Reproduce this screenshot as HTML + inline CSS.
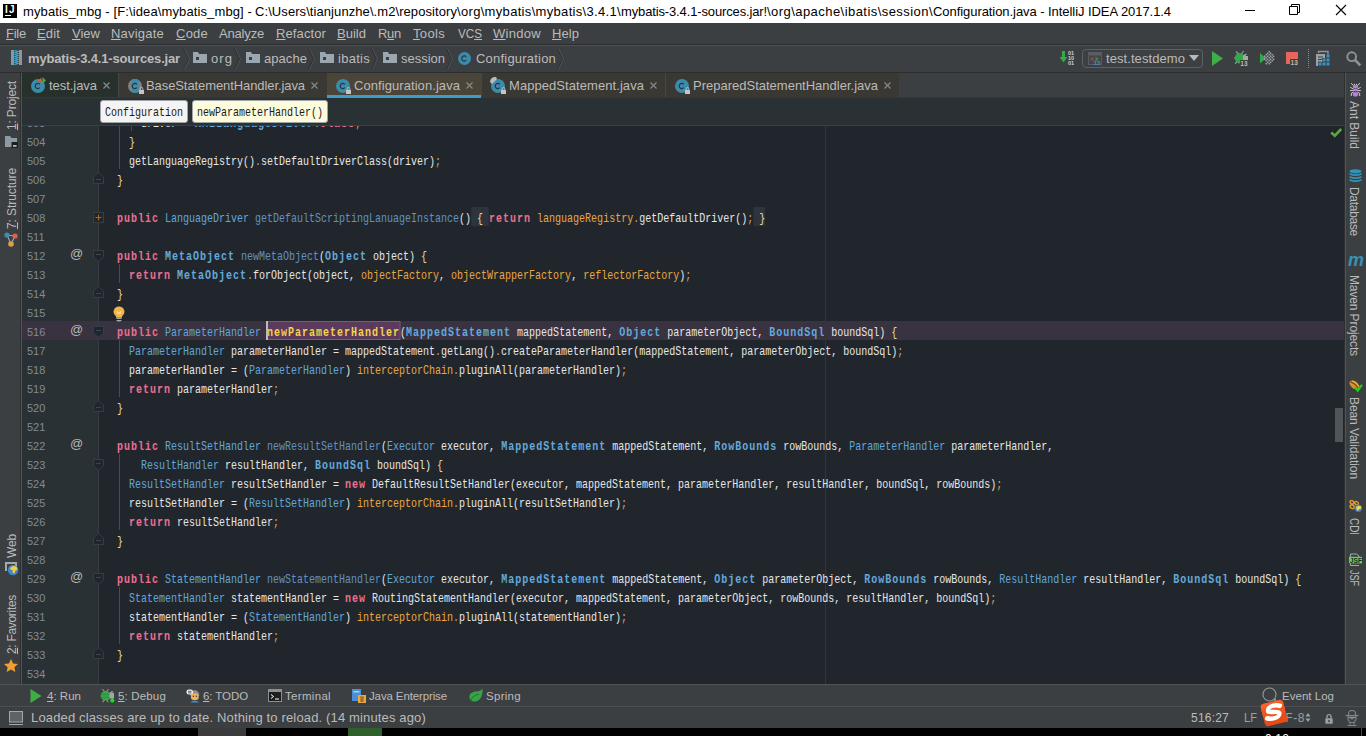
<!DOCTYPE html>
<html><head><meta charset="utf-8"><title>mybatis_mbg - IntelliJ IDEA</title>
<style>
html,body{margin:0;padding:0;background:#000;}
#root{position:relative;width:1366px;height:736px;overflow:hidden;background:#3c3f41;font-family:"Liberation Sans", sans-serif;}
#root div,#root svg,#root span.tx,#root pre,#root span.lnum{position:absolute;}
.tx{white-space:pre;line-height:20px;height:20px;}
.tx u{text-decoration:underline;text-underline-offset:1px;}
pre.cl{margin:0;left:6px;height:19px;line-height:19px;font-family:"Liberation Mono", monospace;font-size:13px;letter-spacing:0;color:#e6e6e6;white-space:pre;padding-top:2px;transform:scaleX(0.76923);transform-origin:0 0;}
pre.cl b{font-weight:normal;}
pre.cl i{font-style:normal;color:#c9a56e;}
pre.cl b.k{font-weight:bold;color:#ed7091;letter-spacing:1.3px;}
pre.cl b.T{font-weight:bold;color:#64aadc;letter-spacing:1.3px;}
pre.cl b.t{color:#62a6d8;}
pre.cl b.m{color:#6391bd;}
pre.cl b.f{color:#e8a742;}
pre.cl b.b{color:#e6dba0;}
pre.cl b.F{color:#e6dba0;background:#2e343b;display:inline-block;height:19px;margin-top:-2px;padding-top:2px;vertical-align:top;box-sizing:border-box;}
pre.cl b.H{font-weight:bold;color:#f4d24e;letter-spacing:1.3px;background:#5b3a5c;outline:1px solid #7d5a7d;outline-offset:-1px;display:inline-block;height:19px;margin-top:-2px;padding-top:2px;vertical-align:top;box-sizing:border-box;}
.bc{font-family:"Liberation Mono", monospace;font-size:13px;letter-spacing:0;line-height:19px;transform:scaleX(0.76923);transform-origin:0 0;}
span.lnum{left:5px;font-size:11px;line-height:19px;height:19px;color:#7f8b95;letter-spacing:0px;padding-top:2px;}
</style></head>
<body><div id="root">
<div style="left:0px;top:0px;width:1366px;height:23px;background:#ffffff;"></div>
<div style="left:0px;top:23px;width:1366px;height:21px;background:#3c3f41;"></div>
<div style="left:0px;top:44px;width:1366px;height:1px;background:#2a2c2d;"></div>
<div style="left:0px;top:45px;width:1366px;height:1px;background:#515455;"></div>
<div style="left:0px;top:46px;width:1366px;height:26px;background:#3c3f41;"></div>
<div style="left:0px;top:72px;width:1366px;height:1px;background:#2b2d2e;"></div>
<div style="left:0px;top:73px;width:20px;height:611px;background:#3c3f41;"></div>
<div style="left:20px;top:73px;width:1px;height:611px;background:#2d2f31;"></div>
<div style="left:21px;top:73px;width:1px;height:611px;background:#515455;"></div>
<div style="left:22px;top:73px;width:1323px;height:25px;background:#3c3f41;"></div>
<div style="left:22px;top:97px;width:1323px;height:1px;background:#34383b;"></div>
<div style="left:22px;top:98px;width:1323px;height:27px;background:#2a3135;"></div>
<div style="left:22px;top:125px;width:1323px;height:1px;background:#3a4045;"></div>
<div style="left:22px;top:126px;width:77px;height:558px;background:#2a3135;"></div>
<div style="left:98px;top:126px;width:1px;height:558px;background:#343c40;"></div>
<div style="left:99px;top:126px;width:1246px;height:558px;background:#21262d;"></div>
<div style="left:1344px;top:73px;width:1px;height:611px;background:#2d2f31;"></div>
<div style="left:1345px;top:73px;width:1px;height:611px;background:#515455;"></div>
<div style="left:1346px;top:73px;width:20px;height:611px;background:#3c3f41;"></div>
<div style="left:0px;top:684px;width:1366px;height:1px;background:#515455;"></div>
<div style="left:0px;top:685px;width:1366px;height:21px;background:#3c3f41;"></div>
<div style="left:0px;top:706px;width:1366px;height:1px;background:#4c4f51;"></div>
<div style="left:0px;top:707px;width:1366px;height:21px;background:#3c3f41;"></div>
<div style="left:0px;top:728px;width:1366px;height:8px;background:#000000;"></div>
<div style="left:198px;top:728px;width:48px;height:8px;background:#3b3b3b;"></div>
<div style="left:348px;top:728px;width:34px;height:8px;background:#2f5f2a;"></div>
<div style="left:22px;top:321px;width:76px;height:19px;background:#393240;"></div>
<div style="left:99px;top:321px;width:1245px;height:19px;background:#393240;"></div>
<div style="left:825px;top:126px;width:1px;height:558px;background:#30363c;"></div>
<div id="ed" style="left:99px;top:126px;width:1245px;height:558px;overflow:hidden">
<pre class="cl" style="top:-14px">      driver = <b class="T">XMLLanguageDriver</b><i>.</i><b class="k">class</b><i>;</i></pre>
<pre class="cl" style="top:5px">    <b class="b">}</b></pre>
<pre class="cl" style="top:24px">    getLanguageRegistry()<i>.</i>setDefaultDriverClass(driver)<i>;</i></pre>
<pre class="cl" style="top:43px">  <b class="b">}</b></pre>
<pre class="cl" style="top:81px">  <b class="k">public</b> <b class="t">LanguageDriver</b> <b class="m">getDefaultScriptingLanuageInstance</b>()<b class="F"> { </b><b class="k">return</b> <b class="f">languageRegistry</b><i>.</i>getDefaultDriver()<i>;</i><b class="F"> }</b></pre>
<pre class="cl" style="top:119px">  <b class="k">public</b> <b class="T">MetaObject</b> <b class="m">newMetaObject</b>(<b class="T">Object</b> object) <b class="b">{</b></pre>
<pre class="cl" style="top:138px">    <b class="k">return</b> <b class="T">MetaObject</b><i>.</i>forObject(object, <b class="f">objectFactory</b>, <b class="f">objectWrapperFactory</b>, <b class="f">reflectorFactory</b>)<i>;</i></pre>
<pre class="cl" style="top:157px">  <b class="b">}</b></pre>
<pre class="cl" style="top:195px">  <b class="k">public</b> <b class="t">ParameterHandler</b> <b class="H">newParameterHandler</b>(<b class="T">MappedStatement</b> mappedStatement, <b class="T">Object</b> parameterObject, <b class="T">BoundSql</b> boundSql) <b class="b">{</b></pre>
<pre class="cl" style="top:214px">    <b class="t">ParameterHandler</b> parameterHandler = mappedStatement<i>.</i>getLang()<i>.</i>createParameterHandler(mappedStatement, parameterObject, boundSql)<i>;</i></pre>
<pre class="cl" style="top:233px">    parameterHandler = (<b class="t">ParameterHandler</b>) <b class="f">interceptorChain</b><i>.</i>pluginAll(parameterHandler)<i>;</i></pre>
<pre class="cl" style="top:252px">    <b class="k">return</b> parameterHandler<i>;</i></pre>
<pre class="cl" style="top:271px">  <b class="b">}</b></pre>
<pre class="cl" style="top:309px">  <b class="k">public</b> <b class="t">ResultSetHandler</b> <b class="m">newResultSetHandler</b>(<b class="t">Executor</b> executor, <b class="T">MappedStatement</b> mappedStatement, <b class="T">RowBounds</b> rowBounds, <b class="t">ParameterHandler</b> parameterHandler,</pre>
<pre class="cl" style="top:328px">      <b class="t">ResultHandler</b> resultHandler, <b class="T">BoundSql</b> boundSql) <b class="b">{</b></pre>
<pre class="cl" style="top:347px">    <b class="t">ResultSetHandler</b> resultSetHandler = <b class="k">new</b> DefaultResultSetHandler(executor, mappedStatement, parameterHandler, resultHandler, boundSql, rowBounds)<i>;</i></pre>
<pre class="cl" style="top:366px">    resultSetHandler = (<b class="t">ResultSetHandler</b>) <b class="f">interceptorChain</b><i>.</i>pluginAll(resultSetHandler)<i>;</i></pre>
<pre class="cl" style="top:385px">    <b class="k">return</b> resultSetHandler<i>;</i></pre>
<pre class="cl" style="top:404px">  <b class="b">}</b></pre>
<pre class="cl" style="top:442px">  <b class="k">public</b> <b class="t">StatementHandler</b> <b class="m">newStatementHandler</b>(<b class="t">Executor</b> executor, <b class="T">MappedStatement</b> mappedStatement, <b class="T">Object</b> parameterObject, <b class="T">RowBounds</b> rowBounds, <b class="t">ResultHandler</b> resultHandler, <b class="T">BoundSql</b> boundSql) <b class="b">{</b></pre>
<pre class="cl" style="top:461px">    <b class="t">StatementHandler</b> statementHandler = <b class="k">new</b> RoutingStatementHandler(executor, mappedStatement, parameterObject, rowBounds, resultHandler, boundSql)<i>;</i></pre>
<pre class="cl" style="top:480px">    statementHandler = (<b class="t">StatementHandler</b>) <b class="f">interceptorChain</b><i>.</i>pluginAll(statementHandler)<i>;</i></pre>
<pre class="cl" style="top:499px">    <b class="k">return</b> statementHandler<i>;</i></pre>
<pre class="cl" style="top:518px">  <b class="b">}</b></pre>
</div>
<div id="ln" style="left:22px;top:126px;width:76px;height:558px;overflow:hidden">
<span class="lnum" style="top:-14px">503</span>
<span class="lnum" style="top:5px">504</span>
<span class="lnum" style="top:24px">505</span>
<span class="lnum" style="top:43px">506</span>
<span class="lnum" style="top:62px">507</span>
<span class="lnum" style="top:81px">508</span>
<span class="lnum" style="top:100px">511</span>
<span class="lnum" style="top:119px">512</span>
<span class="lnum" style="top:138px">513</span>
<span class="lnum" style="top:157px">514</span>
<span class="lnum" style="top:176px">515</span>
<span class="lnum" style="top:195px">516</span>
<span class="lnum" style="top:214px">517</span>
<span class="lnum" style="top:233px">518</span>
<span class="lnum" style="top:252px">519</span>
<span class="lnum" style="top:271px">520</span>
<span class="lnum" style="top:290px">521</span>
<span class="lnum" style="top:309px">522</span>
<span class="lnum" style="top:328px">523</span>
<span class="lnum" style="top:347px">524</span>
<span class="lnum" style="top:366px">525</span>
<span class="lnum" style="top:385px">526</span>
<span class="lnum" style="top:404px">527</span>
<span class="lnum" style="top:423px">528</span>
<span class="lnum" style="top:442px">529</span>
<span class="lnum" style="top:461px">530</span>
<span class="lnum" style="top:480px">531</span>
<span class="lnum" style="top:499px">532</span>
<span class="lnum" style="top:518px">533</span>
<span class="lnum" style="top:537px">534</span>
</div>
<div style="left:119px;top:126px;width:1px;height:43px;background:#8a2a50;"></div>
<div style="left:131px;top:126px;width:1px;height:5px;background:#8a2a50;"></div>
<div style="left:119px;top:264px;width:1px;height:19px;background:#8a2a50;"></div>
<div style="left:119px;top:340px;width:1px;height:57px;background:#8a2a50;"></div>
<div style="left:119px;top:454px;width:1px;height:76px;background:#8a2a50;"></div>
<div style="left:119px;top:587px;width:1px;height:57px;background:#8a2a50;"></div>
<div style="left:3px;top:4px;width:14px;height:14px;background:#000000;"></div>
<span id="t1" class="tx" style="left:5px;top:-0.5px;font-size:10px;color:#ffffff;font-weight:bold;letter-spacing:1.328px;">IJ</span>
<div style="left:5px;top:15px;width:6px;height:1px;background:#ffffff;"></div>
<span id="t2" class="tx" style="left:23px;top:2px;font-size:13px;color:#000000;font-weight:normal;letter-spacing:0.116px;">mybatis_mbg - [F:\idea\mybatis_mbg] -</span>
<span id="t3" class="tx" style="left:255px;top:2px;font-size:13px;color:#000000;font-weight:normal;letter-spacing:0.076px;">C:\Users\tianjunzhe\.m2\repository</span>
<span id="t4" class="tx" style="left:457px;top:2px;font-size:13px;color:#000000;font-weight:normal;letter-spacing:0.321px;">\org\mybatis\mybatis\3.4.1\</span>
<span id="t5" class="tx" style="left:621px;top:2px;font-size:13px;color:#000000;font-weight:normal;letter-spacing:-0.137px;">mybatis-3.4.1-sources.jar!</span>
<span id="t6" class="tx" style="left:767px;top:2px;font-size:13px;color:#000000;font-weight:normal;letter-spacing:0.447px;">\org\apache\ibatis\session\</span>
<span id="t7" class="tx" style="left:933px;top:2px;font-size:13px;color:#000000;font-weight:normal;letter-spacing:-0.061px;">Configuration.java - IntelliJ IDEA 2017.1.4</span>
<div style="left:1245px;top:10px;width:10px;height:1px;background:#000000;"></div>
<svg style="left:1289px;top:4px;" width="12" height="12" viewBox="0 0 12 12"><path d="M0.5 2.5h8v8h-8z M2.5 2.5v-2h8v8h-2" fill="none" stroke="#000" stroke-width="1"/></svg>
<svg style="left:1335px;top:4px;" width="12" height="12" viewBox="0 0 12 12"><path d="M1 1l10 10M11 1l-10 10" stroke="#000" stroke-width="1.1" fill="none"/></svg>
<span id="t8" class="tx" style="left:6px;top:24px;font-size:13px;color:#bbbbbb;font-weight:normal;letter-spacing:-0.242px;"><u>F</u>ile</span>
<span id="t9" class="tx" style="left:37px;top:24px;font-size:13px;color:#bbbbbb;font-weight:normal;letter-spacing:0.148px;"><u>E</u>dit</span>
<span id="t10" class="tx" style="left:72px;top:24px;font-size:13px;color:#bbbbbb;font-weight:normal;letter-spacing:0.012px;"><u>V</u>iew</span>
<span id="t11" class="tx" style="left:111px;top:24px;font-size:13px;color:#bbbbbb;font-weight:normal;letter-spacing:0.211px;"><u>N</u>avigate</span>
<span id="t12" class="tx" style="left:176px;top:24px;font-size:13px;color:#bbbbbb;font-weight:normal;letter-spacing:0.227px;"><u>C</u>ode</span>
<span id="t13" class="tx" style="left:219px;top:24px;font-size:13px;color:#bbbbbb;font-weight:normal;letter-spacing:-0.181px;">Anal<u>y</u>ze</span>
<span id="t14" class="tx" style="left:276px;top:24px;font-size:13px;color:#bbbbbb;font-weight:normal;letter-spacing:0.107px;"><u>R</u>efactor</span>
<span id="t15" class="tx" style="left:337px;top:24px;font-size:13px;color:#bbbbbb;font-weight:normal;letter-spacing:0.016px;"><u>B</u>uild</span>
<span id="t16" class="tx" style="left:378px;top:24px;font-size:13px;color:#bbbbbb;font-weight:normal;letter-spacing:-0.286px;">R<u>u</u>n</span>
<span id="t17" class="tx" style="left:413px;top:24px;font-size:13px;color:#bbbbbb;font-weight:normal;letter-spacing:0.328px;"><u>T</u>ools</span>
<span id="t18" class="tx" style="left:458px;top:24px;font-size:13px;color:#bbbbbb;font-weight:normal;letter-spacing:0px;transform-origin:0 0;transform:scaleX(0.8977);">VC<u>S</u></span>
<span id="t19" class="tx" style="left:493px;top:24px;font-size:13px;color:#bbbbbb;font-weight:normal;letter-spacing:0.292px;"><u>W</u>indow</span>
<span id="t20" class="tx" style="left:552px;top:24px;font-size:13px;color:#bbbbbb;font-weight:normal;letter-spacing:0.062px;"><u>H</u>elp</span>
<svg style="left:11px;top:50px;" width="11" height="15" viewBox="0 0 11 15"><rect x="0" y="0" width="3" height="15" fill="#8d969c"/><rect x="8" y="0" width="3" height="15" fill="#8d969c"/><path d="M3.5 0.5l4 1l-4 1l4 1l-4 1l4 1l-4 1l4 1l-4 1l4 1l-4 1l4 1l-4 1l4 1l-4 1" stroke="#39b5e6" stroke-width="1" fill="none"/></svg>
<span id="t21" class="tx" style="left:28px;top:48.5px;font-size:13px;color:#bbbbbb;font-weight:bold;letter-spacing:-0.163px;">mybatis-3.4.1-sources.jar</span>
<svg style="left:183px;top:48px;" width="7" height="22" viewBox="0 0 7 22"><path d="M0.5 0.5l5 10.5l-5 10.5" stroke="#2d2f30" stroke-width="1" fill="none"/><path d="M1.5 0.5l5 10.5l-5 10.5" stroke="#4e5254" stroke-width="1" fill="none"/></svg>
<svg style="left:193px;top:52px;" width="14" height="11" viewBox="0 0 14 11"><path d="M0 0h5l1 2h8v9h-14z" fill="#9aa7b0"/><rect x="3" y="5" width="3" height="3" fill="#3c3f41"/></svg>
<span id="t22" class="tx" style="left:211px;top:48.5px;font-size:13px;color:#bbbbbb;font-weight:normal;letter-spacing:1.068px;">org</span>
<svg style="left:234px;top:48px;" width="7" height="22" viewBox="0 0 7 22"><path d="M0.5 0.5l5 10.5l-5 10.5" stroke="#2d2f30" stroke-width="1" fill="none"/><path d="M1.5 0.5l5 10.5l-5 10.5" stroke="#4e5254" stroke-width="1" fill="none"/></svg>
<svg style="left:246px;top:52px;" width="14" height="11" viewBox="0 0 14 11"><path d="M0 0h5l1 2h8v9h-14z" fill="#9aa7b0"/><rect x="3" y="5" width="3" height="3" fill="#3c3f41"/></svg>
<span id="t23" class="tx" style="left:264px;top:48.5px;font-size:13px;color:#bbbbbb;font-weight:normal;letter-spacing:0.057px;">apache</span>
<svg style="left:308px;top:48px;" width="7" height="22" viewBox="0 0 7 22"><path d="M0.5 0.5l5 10.5l-5 10.5" stroke="#2d2f30" stroke-width="1" fill="none"/><path d="M1.5 0.5l5 10.5l-5 10.5" stroke="#4e5254" stroke-width="1" fill="none"/></svg>
<svg style="left:320px;top:52px;" width="14" height="11" viewBox="0 0 14 11"><path d="M0 0h5l1 2h8v9h-14z" fill="#9aa7b0"/><rect x="3" y="5" width="3" height="3" fill="#3c3f41"/></svg>
<span id="t24" class="tx" style="left:338px;top:48.5px;font-size:13px;color:#bbbbbb;font-weight:normal;letter-spacing:0.273px;">ibatis</span>
<svg style="left:371px;top:48px;" width="7" height="22" viewBox="0 0 7 22"><path d="M0.5 0.5l5 10.5l-5 10.5" stroke="#2d2f30" stroke-width="1" fill="none"/><path d="M1.5 0.5l5 10.5l-5 10.5" stroke="#4e5254" stroke-width="1" fill="none"/></svg>
<svg style="left:383px;top:52px;" width="14" height="11" viewBox="0 0 14 11"><path d="M0 0h5l1 2h8v9h-14z" fill="#9aa7b0"/><rect x="3" y="5" width="3" height="3" fill="#3c3f41"/></svg>
<span id="t25" class="tx" style="left:401px;top:48.5px;font-size:13px;color:#bbbbbb;font-weight:normal;letter-spacing:-0.011px;">session</span>
<svg style="left:446px;top:48px;" width="7" height="22" viewBox="0 0 7 22"><path d="M0.5 0.5l5 10.5l-5 10.5" stroke="#2d2f30" stroke-width="1" fill="none"/><path d="M1.5 0.5l5 10.5l-5 10.5" stroke="#4e5254" stroke-width="1" fill="none"/></svg>
<svg style="left:458px;top:52px;" width="13" height="13" viewBox="0 0 13 13"><circle cx="6.5" cy="6.5" r="6.5" fill="#3b8cab"/><path d="M8.3 4.8a2.600 2.600 0 1 0 0 3.400" stroke="#27353d" stroke-width="1.200" fill="none"/></svg>
<span id="t26" class="tx" style="left:476px;top:48.5px;font-size:13px;color:#bbbbbb;font-weight:normal;letter-spacing:0.206px;">Configuration</span>
<svg style="left:557px;top:48px;" width="7" height="22" viewBox="0 0 7 22"><path d="M0.5 0.5l5 10.5l-5 10.5" stroke="#2d2f30" stroke-width="1" fill="none"/><path d="M1.5 0.5l5 10.5l-5 10.5" stroke="#4e5254" stroke-width="1" fill="none"/></svg>
<svg style="left:1059px;top:50px;" width="17" height="16" viewBox="0 0 17 16"><path d="M3 1h3v6h2.5l-4 5.5l-4 -5.5h2.5z" fill="#3aa845"/><g font-family="Liberation Sans, sans-serif" font-size="5.5" fill="#cfcfcf" font-weight="bold"><text x="9" y="5">01</text><text x="9" y="10">10</text><text x="9" y="15">01</text></g></svg>
<div style="left:1082px;top:49px;width:119px;height:17px;border:1px solid #5d6062;border-radius:4px;background:#3d4042;box-sizing:content-box"></div>
<svg style="left:1088px;top:52px;" width="14" height="13" viewBox="0 0 14 13"><rect x="0.5" y="0.5" width="13" height="12" fill="#414547" stroke="#595c5e"/><rect x="1" y="1" width="12" height="2.5" fill="#5b5e60"/><path d="M5.5 4.5v5l-3.5 -2.5z" fill="#8e4b46"/><path d="M7.5 4.5v5l3.5 -2.5z" fill="#4b7f50"/><text x="5.5" y="12.5" font-family="Liberation Sans, sans-serif" font-size="6" font-weight="bold" fill="#4a90c8">13</text></svg>
<span id="t27" class="tx" style="left:1106px;top:48.5px;font-size:13px;color:#bbbbbb;font-weight:normal;letter-spacing:0.073px;">test.testdemo</span>
<svg style="left:1189px;top:55px;" width="10" height="6" viewBox="0 0 10 6"><path d="M0 0h10l-5 6z" fill="#b8b8b8"/></svg>
<svg style="left:1212px;top:51px;" width="11" height="15" viewBox="0 0 11 15"><path d="M0 0l11 7.5l-11 7.5z" fill="#3fae49"/></svg>
<svg style="left:1233px;top:49px;" width="17" height="18" viewBox="0 0 17 18"><path d="M3 2.5l3 3M10.5 2l-2.5 3.5M1 9h2M2 14.5l2.5 -2M13.5 5l-2 1.5" stroke="#9da3a6" stroke-width="1.1"/><ellipse cx="6.8" cy="9.3" rx="5" ry="5.3" fill="#37a84a"/><path d="M10 6.5l2.5 -1.5v2h2.5v5h-5z" fill="#a4a9ac"/><rect x="7" y="11" width="8" height="6" fill="#3c3f41"/><text x="7.3" y="16.5" font-family="Liberation Sans, sans-serif" font-size="6.5" font-weight="bold" fill="#c9b8a0">13</text></svg>
<svg style="left:1259px;top:51px;" width="16" height="15" viewBox="0 0 16 15"><path d="M1 2l6 5.200l-6 5.200z" fill="#37a84a"/><path d="M10.2 -0.20l1 1l-1 1l-1 -1zM8.7 1.30l1 1l-1 1l-1 -1zM11.7 1.30l1 1l-1 1l-1 -1zM7.2 2.80l1 1l-1 1l-1 -1zM10.2 2.80l1 1l-1 1l-1 -1zM13.2 2.80l1 1l-1 1l-1 -1zM5.7 4.30l1 1l-1 1l-1 -1zM8.7 4.30l1 1l-1 1l-1 -1zM11.7 4.30l1 1l-1 1l-1 -1zM14.7 4.30l1 1l-1 1l-1 -1zM7.2 5.80l1 1l-1 1l-1 -1zM10.2 5.80l1 1l-1 1l-1 -1zM13.2 5.80l1 1l-1 1l-1 -1zM5.7 7.30l1 1l-1 1l-1 -1zM8.7 7.30l1 1l-1 1l-1 -1zM11.7 7.30l1 1l-1 1l-1 -1zM14.7 7.30l1 1l-1 1l-1 -1zM7.2 8.80l1 1l-1 1l-1 -1zM10.2 8.80l1 1l-1 1l-1 -1zM13.2 8.80l1 1l-1 1l-1 -1zM8.7 10.30l1 1l-1 1l-1 -1zM11.7 10.30l1 1l-1 1l-1 -1zM7.2 11.80l1 1l-1 1l-1 -1zM10.2 11.80l1 1l-1 1l-1 -1z" fill="#a9adb0"/></svg>
<svg style="left:1285px;top:52px;" width="14" height="14" viewBox="0 0 14 14"><rect x="1" y="0" width="12" height="12" fill="#e8655b"/><rect x="5" y="7" width="9" height="7" fill="#3c3f41"/><text x="5.6" y="13" font-family="Liberation Sans, sans-serif" font-size="6.5" font-weight="bold" fill="#c9b8a0">13</text></svg>
<div style="left:1308px;top:49px;width:1px;height:1px;background:#85888a;"></div>
<div style="left:1308px;top:51px;width:1px;height:1px;background:#85888a;"></div>
<div style="left:1308px;top:53px;width:1px;height:1px;background:#85888a;"></div>
<div style="left:1308px;top:55px;width:1px;height:1px;background:#85888a;"></div>
<div style="left:1308px;top:57px;width:1px;height:1px;background:#85888a;"></div>
<div style="left:1308px;top:59px;width:1px;height:1px;background:#85888a;"></div>
<div style="left:1308px;top:61px;width:1px;height:1px;background:#85888a;"></div>
<div style="left:1308px;top:63px;width:1px;height:1px;background:#85888a;"></div>
<div style="left:1308px;top:65px;width:1px;height:1px;background:#85888a;"></div>
<div style="left:1308px;top:67px;width:1px;height:1px;background:#85888a;"></div>
<svg style="left:1315px;top:50px;" width="16" height="16" viewBox="0 0 16 16"><path d="M3.5 3v-1.500h9.500v3" stroke="#8e9599" stroke-width="1.4" fill="none"/><rect x="1" y="4" width="9" height="12" fill="#9aa2a7"/><path d="M3 7h5M3 9.500h4M3 12h3" stroke="#3c3f41" stroke-width="1.2"/><path d="M7 8h4v8h-8v-4h4z" fill="#3c3f41"/><g fill="#3592c4"><rect x="11.500" y="4.500" width="3" height="3"/><rect x="7.500" y="8.500" width="3" height="3"/><rect x="11.500" y="8.500" width="3" height="3"/><rect x="3.500" y="12.500" width="3" height="3"/><rect x="7.500" y="12.500" width="3" height="3"/><rect x="11.500" y="12.500" width="3" height="3"/></g></svg>
<svg style="left:1346px;top:51px;" width="16" height="16" viewBox="0 0 16 16"><circle cx="5.7" cy="5.7" r="4.4" stroke="#8f9395" stroke-width="1.9" fill="none"/><path d="M9 9l5.3 5.3" stroke="#8f9395" stroke-width="2.6"/></svg>
<div style="left:22px;top:73px;width:96px;height:24px;background:#27302a;"></div>
<div style="left:118px;top:73px;width:1px;height:24px;background:#45484a;"></div>
<div style="left:119px;top:73px;width:208px;height:24px;background:#3a3832;"></div>
<div style="left:327px;top:73px;width:154px;height:24px;background:#4a4538;"></div>
<div style="left:327px;top:95px;width:154px;height:3px;background:#3d9dc6;"></div>
<div style="left:481px;top:73px;width:1px;height:24px;background:#45484a;"></div>
<div style="left:482px;top:73px;width:183px;height:24px;background:#3a3832;"></div>
<div style="left:665px;top:73px;width:1px;height:24px;background:#45484a;"></div>
<div style="left:666px;top:73px;width:233px;height:24px;background:#3a3832;"></div>
<svg style="left:31px;top:79px;" width="14" height="14" viewBox="0 0 14 14"><circle cx="7.0" cy="7.0" r="7.0" fill="#3b8cab"/><path d="M8.8 5.3a2.600 2.600 0 1 0 0 3.400" stroke="#27353d" stroke-width="1.200" fill="none"/></svg>
<svg style="left:38px;top:77px;" width="8" height="7" viewBox="0 0 8 7"><path d="M0 3.5l3.5 -3v6z" fill="#e05a2b"/><path d="M4.5 0l3.5 3.5l-3.5 3z" fill="#3fae49"/></svg>
<span id="t28" class="tx" style="left:49px;top:76px;font-size:13px;color:#bbbbbb;font-weight:normal;letter-spacing:-0.047px;">test.java</span>
<svg style="left:103px;top:82px;" width="7" height="7" viewBox="0 0 7 7"><path d="M0.5 0.5l6 6M6.5 0.5l-6 6" stroke="#85898b" stroke-width="1.2" fill="none"/></svg>
<svg style="left:128px;top:79px;" width="14" height="14" viewBox="0 0 14 14"><circle cx="7.0" cy="7.0" r="7.0" fill="#7b8286"/><path d="M3.500 0.94A7.0 7.0 0 0 1 10.5 0.94L10.5 13.06A7.0 7.0 0 0 1 3.500 13.06Z" fill="#3b8cab"/><path d="M8.8 5.3a2.600 2.600 0 1 0 0 3.400" stroke="#27353d" stroke-width="1.200" fill="none"/></svg>
<svg style="left:139px;top:87px;" width="5" height="7" viewBox="0 0 5 7"><path d="M1.2 3v-1.3a1.3 1.3 0 0 1 2.6 0v1.3" stroke="#c3c7c9" fill="none" stroke-width="0.9"/><rect x="0" y="3" width="5" height="4" fill="#c3c7c9"/></svg>
<span id="t29" class="tx" style="left:146px;top:76px;font-size:13px;color:#bbbbbb;font-weight:normal;letter-spacing:-0.086px;">BaseStatementHandler.java</span>
<svg style="left:311px;top:82px;" width="7" height="7" viewBox="0 0 7 7"><path d="M0.5 0.5l6 6M6.5 0.5l-6 6" stroke="#85898b" stroke-width="1.2" fill="none"/></svg>
<svg style="left:336px;top:79px;" width="14" height="14" viewBox="0 0 14 14"><circle cx="7.0" cy="7.0" r="7.0" fill="#3b8cab"/><path d="M8.8 5.3a2.600 2.600 0 1 0 0 3.400" stroke="#27353d" stroke-width="1.200" fill="none"/></svg>
<svg style="left:346px;top:87px;" width="5" height="7" viewBox="0 0 5 7"><path d="M1.2 3v-1.3a1.3 1.3 0 0 1 2.6 0v1.3" stroke="#c3c7c9" fill="none" stroke-width="0.9"/><rect x="0" y="3" width="5" height="4" fill="#c3c7c9"/></svg>
<span id="t30" class="tx" style="left:354px;top:76px;font-size:13px;color:#bbbbbb;font-weight:normal;letter-spacing:0.067px;">Configuration.java</span>
<svg style="left:466px;top:82px;" width="7" height="7" viewBox="0 0 7 7"><path d="M0.5 0.5l6 6M6.5 0.5l-6 6" stroke="#85898b" stroke-width="1.2" fill="none"/></svg>
<svg style="left:491px;top:79px;" width="14" height="14" viewBox="0 0 14 14"><circle cx="7.0" cy="7.0" r="7.0" fill="#3b8cab"/><path d="M8.8 5.3a2.600 2.600 0 1 0 0 3.400" stroke="#27353d" stroke-width="1.200" fill="none"/></svg>
<svg style="left:489px;top:76px;" width="9" height="8" viewBox="0 0 9 8"><path d="M1 6a5 5 0 0 1 6 -5l1 2l-5 5z" fill="#b6bcc0"/></svg>
<svg style="left:501px;top:87px;" width="5" height="7" viewBox="0 0 5 7"><path d="M1.2 3v-1.3a1.3 1.3 0 0 1 2.6 0v1.3" stroke="#c3c7c9" fill="none" stroke-width="0.9"/><rect x="0" y="3" width="5" height="4" fill="#c3c7c9"/></svg>
<span id="t31" class="tx" style="left:509px;top:76px;font-size:13px;color:#bbbbbb;font-weight:normal;letter-spacing:0.065px;">MappedStatement.java</span>
<svg style="left:650px;top:82px;" width="7" height="7" viewBox="0 0 7 7"><path d="M0.5 0.5l6 6M6.5 0.5l-6 6" stroke="#85898b" stroke-width="1.2" fill="none"/></svg>
<svg style="left:675px;top:79px;" width="14" height="14" viewBox="0 0 14 14"><circle cx="7.0" cy="7.0" r="7.0" fill="#3b8cab"/><path d="M8.8 5.3a2.600 2.600 0 1 0 0 3.400" stroke="#27353d" stroke-width="1.200" fill="none"/></svg>
<svg style="left:685px;top:87px;" width="5" height="7" viewBox="0 0 5 7"><path d="M1.2 3v-1.3a1.3 1.3 0 0 1 2.6 0v1.3" stroke="#c3c7c9" fill="none" stroke-width="0.9"/><rect x="0" y="3" width="5" height="4" fill="#c3c7c9"/></svg>
<span id="t32" class="tx" style="left:693px;top:76px;font-size:13px;color:#bbbbbb;font-weight:normal;letter-spacing:-0.001px;">PreparedStatementHandler.java</span>
<svg style="left:884px;top:82px;" width="7" height="7" viewBox="0 0 7 7"><path d="M0.5 0.5l6 6M6.5 0.5l-6 6" stroke="#85898b" stroke-width="1.2" fill="none"/></svg>
<div style="left:100px;top:100px;width:86px;height:21px;background:#f4f4f4;border:1px solid #9fa3a5;border-radius:3px;box-sizing:content-box"></div>
<div style="left:192px;top:100px;width:134px;height:21px;background:#fcfcdd;border:1px solid #9fa3a5;border-radius:3px;box-sizing:content-box"></div>
<span class="tx bc" style="left:105px;top:103px;color:#1a1a1a">Configuration</span>
<span class="tx bc" style="left:197px;top:103px;color:#1a1a1a">newParameterHandler()</span>
<span id="t33" class="tx" style="left:70px;top:243.5px;font-size:13px;color:#b4b8bb;font-weight:normal;letter-spacing:-0.203px;">@</span>
<span id="t34" class="tx" style="left:70px;top:319.5px;font-size:13px;color:#b4b8bb;font-weight:normal;letter-spacing:-0.203px;">@</span>
<span id="t35" class="tx" style="left:70px;top:433.5px;font-size:13px;color:#b4b8bb;font-weight:normal;letter-spacing:-0.203px;">@</span>
<span id="t36" class="tx" style="left:70px;top:566.5px;font-size:13px;color:#b4b8bb;font-weight:normal;letter-spacing:-0.203px;">@</span>
<svg style="left:93px;top:250px;" width="11" height="12" viewBox="0 0 11 12"><path d="M0.5 0.5h10v6.5l-5 4.5l-5 -4.5z" fill="#20262d" stroke="#363e43"/><path d="M3 4.5h5" stroke="#3d454a"/></svg>
<svg style="left:93px;top:326px;" width="11" height="12" viewBox="0 0 11 12"><path d="M0.5 0.5h10v6.5l-5 4.5l-5 -4.5z" fill="#20262d" stroke="#363e43"/><path d="M3 4.5h5" stroke="#3d454a"/></svg>
<svg style="left:93px;top:459px;" width="11" height="12" viewBox="0 0 11 12"><path d="M0.5 0.5h10v6.5l-5 4.5l-5 -4.5z" fill="#20262d" stroke="#363e43"/><path d="M3 4.5h5" stroke="#3d454a"/></svg>
<svg style="left:93px;top:573px;" width="11" height="12" viewBox="0 0 11 12"><path d="M0.5 0.5h10v6.5l-5 4.5l-5 -4.5z" fill="#20262d" stroke="#363e43"/><path d="M3 4.5h5" stroke="#3d454a"/></svg>
<svg style="left:93px;top:172px;" width="11" height="12" viewBox="0 0 11 12"><path d="M0.5 11.5h10v-6.5l-5 -4.5l-5 4.5z" fill="#20262d" stroke="#363e43"/><path d="M3 7.5h5" stroke="#3d454a"/></svg>
<svg style="left:93px;top:286px;" width="11" height="12" viewBox="0 0 11 12"><path d="M0.5 11.5h10v-6.5l-5 -4.5l-5 4.5z" fill="#20262d" stroke="#363e43"/><path d="M3 7.5h5" stroke="#3d454a"/></svg>
<svg style="left:93px;top:400px;" width="11" height="12" viewBox="0 0 11 12"><path d="M0.5 11.5h10v-6.5l-5 -4.5l-5 4.5z" fill="#20262d" stroke="#363e43"/><path d="M3 7.5h5" stroke="#3d454a"/></svg>
<svg style="left:93px;top:533px;" width="11" height="12" viewBox="0 0 11 12"><path d="M0.5 11.5h10v-6.5l-5 -4.5l-5 4.5z" fill="#20262d" stroke="#363e43"/><path d="M3 7.5h5" stroke="#3d454a"/></svg>
<svg style="left:93px;top:647px;" width="11" height="12" viewBox="0 0 11 12"><path d="M0.5 11.5h10v-6.5l-5 -4.5l-5 4.5z" fill="#20262d" stroke="#363e43"/><path d="M3 7.5h5" stroke="#3d454a"/></svg>
<svg style="left:93px;top:212px;" width="11" height="11" viewBox="0 0 11 11"><rect x="0.5" y="0.5" width="10" height="10" fill="#20262d" stroke="#363e43"/><path d="M2.5 5.5h6M5.5 2.5v6" stroke="#b5651d"/></svg>
<svg style="left:113px;top:306px;" width="12" height="16" viewBox="0 0 12 16"><path d="M6 0.5a5.3 5.3 0 0 1 3.2 9.6l-0.4 1.6h-5.6l-0.4 -1.6a5.3 5.3 0 0 1 3.2 -9.6z" fill="#f4b345"/><path d="M4 5l1 3l1 -2l1 2l1 -3" stroke="#fde9b5" fill="none" stroke-width="0.8"/><rect x="3.5" y="12" width="5" height="1" fill="#a5a9ab"/><rect x="3.5" y="14" width="5" height="1" fill="#a5a9ab"/><rect x="4.5" y="15.5" width="3" height="0.5" fill="#a5a9ab"/></svg>
<svg style="left:1330px;top:127px;" width="13" height="11" viewBox="0 0 13 11"><path d="M1.2 5.5l3.6 3.2l6.4 -6.7" stroke="#5aa83f" stroke-width="2.6" fill="none"/></svg>
<div style="left:1335px;top:408px;width:8px;height:34px;background:#4f5559;"></div>
<span id="t37" class="tx" style="left:2px;top:130px;transform-origin:0 0;transform:rotate(-90deg);font-size:12px;color:#bbbbbb;letter-spacing:-0.17px"><u>1</u>: Project</span>
<svg style="left:5px;top:136px;" width="13" height="12" viewBox="0 0 13 12"><path d="M0 0h5l1.500 2h5.500v9h-12z" fill="#8d9aa4"/><rect x="6.500" y="6" width="6.500" height="6" fill="#1d1f21"/><rect x="8" y="9.300" width="3.600" height="1.300" fill="#f0f0f0"/></svg>
<span id="t38" class="tx" style="left:2px;top:229px;transform-origin:0 0;transform:rotate(-90deg);font-size:12px;color:#bbbbbb;letter-spacing:-0.087px"><u>7</u>: Structure</span>
<svg style="left:4px;top:232px;" width="14" height="15" viewBox="0 0 14 15"><path d="M3 3l8 1M3 3l4 9M11 4l-4 8" stroke="#9aa7b0" stroke-width="1.2"/><circle cx="3" cy="3" r="2.6" fill="#3d8fb0"/><circle cx="11" cy="4" r="2.6" fill="#e0604f"/><circle cx="7" cy="12" r="2.8" fill="#d9a343"/></svg>
<span id="t39" class="tx" style="left:2px;top:558px;transform-origin:0 0;transform:rotate(-90deg);font-size:12px;color:#bbbbbb;letter-spacing:-0.156px">Web</span>
<svg style="left:4px;top:561px;" width="15" height="15" viewBox="0 0 15 15"><path d="M2 10v-8h10v3" stroke="#a4a9ac" stroke-width="2" fill="none"/><circle cx="9" cy="9" r="5.2" fill="#3f86d8"/><path d="M6 7l3 -2l3.500 0.500l1 3l-2 1l-1 3l-2 -1l0 -2.500l-2 -0.500z" fill="#f4cf3e"/></svg>
<span id="t40" class="tx" style="left:2px;top:654px;transform-origin:0 0;transform:rotate(-90deg);font-size:12px;color:#bbbbbb;letter-spacing:-0.309px"><u>2</u>: Favorites</span>
<svg style="left:4px;top:659px;" width="14" height="13" viewBox="0 0 14 13"><path d="M7 0l2.1 4.4l4.9 0.6l-3.6 3.3l0.9 4.7l-4.3 -2.4l-4.3 2.4l0.9 -4.7l-3.6 -3.3l4.9 -0.6z" fill="#f0a030"/></svg>
<svg style="left:1349px;top:82px;" width="13" height="15" viewBox="0 0 13 15"><path d="M4.800 3.800l-2.800 -2.600M8.200 3.800l2.800 -2.600M5.500 3l-0.200 -1.200M7.500 3l0.200 -1.200M4.800 7l-3.500 -1.600M8.200 7l3.500 -1.600M4.800 8.500l-3.600 0.100M8.200 8.500l3.600 0.100M4.600 10l-2.200 1.200l-0.100 2.800M8.400 10l2.200 1.200l0.100 2.800" stroke="#c9cccd" stroke-width="1" fill="none"/><ellipse cx="6.500" cy="4.800" rx="2.700" ry="1.700" fill="#b881d6"/><ellipse cx="6.500" cy="8" rx="1.800" ry="1.300" fill="#b881d6"/><ellipse cx="6.500" cy="12.200" rx="2.700" ry="2.300" fill="#b881d6"/></svg>
<span id="t41" class="tx" style="left:1363.5px;top:101px;transform-origin:0 0;transform:rotate(90deg);font-size:12px;color:#bbbbbb;letter-spacing:-0.003px">Ant Build</span>
<svg style="left:1349px;top:169px;" width="13" height="14" viewBox="0 0 13 14"><g fill="#3592b8"><ellipse cx="6.500" cy="2.300" rx="6" ry="2.100"/><path d="M0.500 4q6 2.600 12 0v1.800q-6 2.600 -12 0z"/><path d="M0.500 7q6 2.600 12 0v1.800q-6 2.600 -12 0z"/><path d="M0.500 10q6 2.600 12 0v1.800q-6 2.600 -12 0z"/></g></svg>
<span id="t42" class="tx" style="left:1363.5px;top:187px;transform-origin:0 0;transform:rotate(90deg);font-size:12px;color:#bbbbbb;letter-spacing:-0.297px">Database</span>
<span class="tx" style="left:1348px;top:250px;font-size:18px;font-weight:bold;font-style:italic;color:#3592b8">m</span>
<span id="t43" class="tx" style="left:1363.5px;top:275px;transform-origin:0 0;transform:rotate(90deg);font-size:12px;color:#bbbbbb;letter-spacing:-0.122px">Maven Projects</span>
<svg style="left:1348px;top:379px;" width="16" height="16" viewBox="0 0 16 16"><g transform="rotate(40 6.500 6)"><ellipse cx="6.500" cy="6" rx="5.800" ry="3.500" fill="#d8922c"/><path d="M1.500 6q5 -1.600 10 0" stroke="#6b3d0c" stroke-width="1.100" fill="none"/><path d="M2 4.500q4.500 -2.300 9 0" stroke="#f0b454" stroke-width="0.900" fill="none"/></g><path d="M7 8l2.700 3.600l4.300 -5.800" stroke="#1ecf1e" stroke-width="2.200" fill="none"/></svg>
<span id="t44" class="tx" style="left:1363.5px;top:397px;transform-origin:0 0;transform:rotate(90deg);font-size:12px;color:#bbbbbb;letter-spacing:-0.079px">Bean Validation</span>
<svg style="left:1349px;top:500px;" width="14" height="13" viewBox="0 0 14 13"><ellipse cx="3" cy="2.300" rx="2" ry="1.600" transform="rotate(35 3 2.300)" fill="none" stroke="#e09a2c" stroke-width="1.500"/><ellipse cx="3.200" cy="6.800" rx="2.200" ry="1.700" transform="rotate(35 3.200 6.800)" fill="none" stroke="#e09a2c" stroke-width="1.500"/><ellipse cx="7.500" cy="3.200" rx="2" ry="1.500" transform="rotate(35 7.500 3.200)" fill="none" stroke="#e09a2c" stroke-width="1.400"/><circle cx="9.300" cy="8.300" r="3.700" fill="#2f7fd6"/><path d="M7 7l2.500 -1.500l2.800 1l-0.500 2.500l-2 0.500l-0.800 1.800l-1.500 -1.800z" fill="#f6d33a"/></svg>
<span id="t45" class="tx" style="left:1363.5px;top:518px;transform-origin:0 0;transform:rotate(90deg) scaleX(0.8224);font-size:12px;color:#bbbbbb;letter-spacing:0px">CDI</span>
<svg style="left:1348px;top:553px;" width="15" height="14" viewBox="0 0 15 14"><path d="M2.500 4v-3h6l2.500 2v1M2.500 10.500v2h8.500" stroke="#a4a9ac" stroke-width="1" fill="none"/><rect x="1" y="3.800" width="13" height="6.600" fill="#62d060"/><text x="1.800" y="9.600" font-family="Liberation Sans, sans-serif" font-size="6.800" font-weight="bold" fill="#16351a">JSF</text></svg>
<span id="t46" class="tx" style="left:1363.5px;top:570px;transform-origin:0 0;transform:rotate(90deg) scaleX(0.7496);font-size:12px;color:#bbbbbb;letter-spacing:0px">JSF</span>
<svg style="left:30px;top:689px;" width="12" height="14" viewBox="0 0 12 14"><path d="M0.5 0l11 7l-11 7z" fill="#3fae49"/></svg>
<span id="t47" class="tx" style="left:47px;top:686px;font-size:11.5px;color:#bbbbbb;font-weight:normal;letter-spacing:0.016px;"><u>4</u>: Run</span>
<svg style="left:100px;top:688px;" width="15" height="15" viewBox="0 0 15 15"><path d="M2.500 1.500q1.500 0.500 2 2.500M8.500 1.500q-1.500 0.500 -2 2.500M2.500 14q1.500 -0.500 2 -2.500M8.500 14q-1.500 -0.500 -2 -2.500M12.500 3.500q-1.500 0 -2 1.500M13.500 11q-1.500 0 -2 -1.500" stroke="#b8bcbe" stroke-width="1" fill="none"/><ellipse cx="5.800" cy="7.800" rx="5.200" ry="4.800" fill="#35a548"/><path d="M1 6.500h9.500M1 9.500h9.500" stroke="#2a8c3b" stroke-width="0.800"/><path d="M9.500 5a3.500 3 0 0 1 4.500 0v5a3.500 3 0 0 1 -4.500 0z" fill="#9fa4a7"/><circle cx="12.300" cy="12.600" r="2.100" fill="#16e016"/></svg>
<span id="t48" class="tx" style="left:118px;top:686px;font-size:11.5px;color:#bbbbbb;font-weight:normal;letter-spacing:0.164px;"><u>5</u>: Debug</span>
<svg style="left:186px;top:688px;" width="15" height="15" viewBox="0 0 15 15"><path d="M4.500 6.500a4.300 4.300 0 0 1 8.600 0v1.500h-8.600z" fill="#8e9193"/><rect x="5" y="5.500" width="7.600" height="6.500" rx="2.500" fill="#f0b45e"/><rect x="6.800" y="7.600" width="1.200" height="1.400" fill="#5a3d1a"/><rect x="9.800" y="7.600" width="1.200" height="1.400" fill="#5a3d1a"/><path d="M4.500 14.500q4.300 -4 8.600 0z" fill="#3f8fd8"/><rect x="0.500" y="1.500" width="6.500" height="5" rx="2.300" fill="#f2f2f2"/><path d="M2 3.300h3.500M2 4.900h3.500" stroke="#333" stroke-width="0.800"/></svg>
<span id="t49" class="tx" style="left:203px;top:686px;font-size:11.5px;color:#bbbbbb;font-weight:normal;letter-spacing:-0.087px;"><u>6</u>: TODO</span>
<svg style="left:268px;top:689px;" width="14" height="13" viewBox="0 0 14 13"><rect x="0.5" y="0.5" width="13" height="12" fill="#1e1e1e" stroke="#8a8f92"/><rect x="1" y="1" width="12" height="2" fill="#8a8f92"/><path d="M3 5.5l2.5 2l-2.5 2" stroke="#fff" fill="none"/><path d="M7 10h4" stroke="#fff"/></svg>
<span id="t50" class="tx" style="left:285px;top:686px;font-size:11.5px;color:#bbbbbb;font-weight:normal;letter-spacing:0.316px;">Terminal</span>
<svg style="left:352px;top:688px;" width="14" height="15" viewBox="0 0 14 15"><rect x="0" y="1" width="9" height="12" fill="#4a8fd6"/><rect x="1.5" y="3" width="6" height="1.5" fill="#a8d0f4"/><rect x="6" y="7" width="8" height="8" fill="#e8a742"/><path d="M8 9h4M8 11h4M8 13h4M10 9v5" stroke="#7a4e12" stroke-width="0.8"/></svg>
<span id="t51" class="tx" style="left:369px;top:686px;font-size:11.5px;color:#bbbbbb;font-weight:normal;letter-spacing:-0.127px;">Java Enterprise</span>
<svg style="left:469px;top:688px;" width="14" height="14" viewBox="0 0 14 14"><path d="M13.5 0.5c0.5 7 -2 13 -8 13c-3.5 0 -5.5 -2.5 -5 -5.5c0.6 -3.6 4.5 -4.5 8 -4.8c2 -0.2 4 -1 5 -2.7z" fill="#36a347"/><path d="M1 13c2 -4 5 -6 9 -7" stroke="#1f6b2a" stroke-width="0.9" fill="none"/></svg>
<span id="t52" class="tx" style="left:486px;top:686px;font-size:11.5px;color:#bbbbbb;font-weight:normal;letter-spacing:0.292px;">Spring</span>
<svg style="left:1262px;top:687px;" width="16" height="16" viewBox="0 0 16 16"><circle cx="7.5" cy="7.5" r="6.5" stroke="#8f9497" stroke-width="1.2" fill="none"/><path d="M11 12l3 3.5l0 -4z" fill="#8f9497"/></svg>
<span id="t53" class="tx" style="left:1282px;top:686px;font-size:11.5px;color:#bbbbbb;font-weight:normal;letter-spacing:0.023px;">Event Log</span>
<svg style="left:9px;top:711px;" width="15" height="14" viewBox="0 0 15 14"><rect x="0.5" y="0.5" width="13" height="10.5" fill="#5f6365" stroke="#a2a6a8"/><path d="M0 13.5h14" stroke="#a2a6a8"/></svg>
<span id="t54" class="tx" style="left:31px;top:707.5px;font-size:13px;color:#bbbbbb;font-weight:normal;letter-spacing:0.148px;">Loaded classes are up to date. Nothing to reload. (14 minutes ago)</span>
<span id="t55" class="tx" style="left:1191px;top:707.5px;font-size:12px;color:#bbbbbb;font-weight:normal;letter-spacing:0.216px;">516:27</span>
<span id="t56" class="tx" style="left:1244px;top:707.5px;font-size:12px;color:#9da0a2;font-weight:normal;letter-spacing:0px;transform-origin:0 0;transform:scaleX(0.9275);">LF</span>
<span id="t57" class="tx" style="left:1268px;top:707.5px;font-size:12px;color:#9da0a2;font-weight:normal;letter-spacing:0.6px;">UTF-8</span>
<svg style="left:1305px;top:712px;" width="6" height="11" viewBox="0 0 6 11"><path d="M0.5 4.5l2.5 -3.5l2.5 3.5zM0.5 6.5l2.5 3.5l2.5 -3.5z" fill="#9da0a2"/></svg>
<svg style="left:1325px;top:714px;" width="8" height="10" viewBox="0 0 8 10"><path d="M2 4.500v-1.800a2 2 0 0 1 4 0v1.800" stroke="#9aa0a3" fill="none" stroke-width="1.300"/><rect x="0.300" y="4.300" width="7.400" height="5.400" rx="0.800" fill="#9aa0a3"/><rect x="3.300" y="6" width="1.400" height="2.200" fill="#3c3f41"/></svg>
<svg style="left:1345px;top:710px;" width="14" height="16" viewBox="0 0 14 16"><path d="M3.500 5v-1.500a3.500 3 0 0 1 7 0v1.500" stroke="#7f8487" fill="none" stroke-width="1.200"/><path d="M0.500 5.500h13" stroke="#7f8487" stroke-width="1.200"/><path d="M3 6v3.500l2 3h4l2 -3v-3.500" stroke="#7f8487" fill="none" stroke-width="1.100"/><path d="M3.500 7.500h3l0.500 1l0.500 -1h3" stroke="#8e9396" stroke-width="1.600" fill="none"/><path d="M2.500 15.500h9M5 12.500v3M9 12.500v3" stroke="#7f8487" stroke-width="1"/></svg>
<svg style="left:1257px;top:696px;" width="34" height="34" viewBox="0 0 34 34"><g transform="rotate(-14 17 17)"><rect x="5.500" y="5.500" width="23" height="23" rx="3.500" fill="#ea4a14"/><rect x="5.500" y="5.500" width="23" height="11" rx="3.500" fill="#f1632a"/><rect x="5.500" y="11" width="23" height="8" fill="#ee5720"/><path d="M23.500 11.500c-4 -2.600 -12 -2.400 -12.500 1.300c-0.500 3.800 11 2.200 11.500 6c0.500 3.800 -8 4.400 -13 1.600" stroke="#ffffff" stroke-width="4.300" fill="none" stroke-linecap="round" transform="skewX(-10) translate(3 0)"/></g></svg>
<span id="t58" class="tx" style="left:1265px;top:728.5px;font-size:12px;color:#ffffff;font-weight:normal;letter-spacing:0.16px;">0:12</span>
<div style="left:266px;top:321px;width:2px;height:19px;background:#b9bcbe;"></div>
<div style="left:1361px;top:728px;width:1px;height:8px;background:#4a4a4a;"></div>
</div></body></html>
